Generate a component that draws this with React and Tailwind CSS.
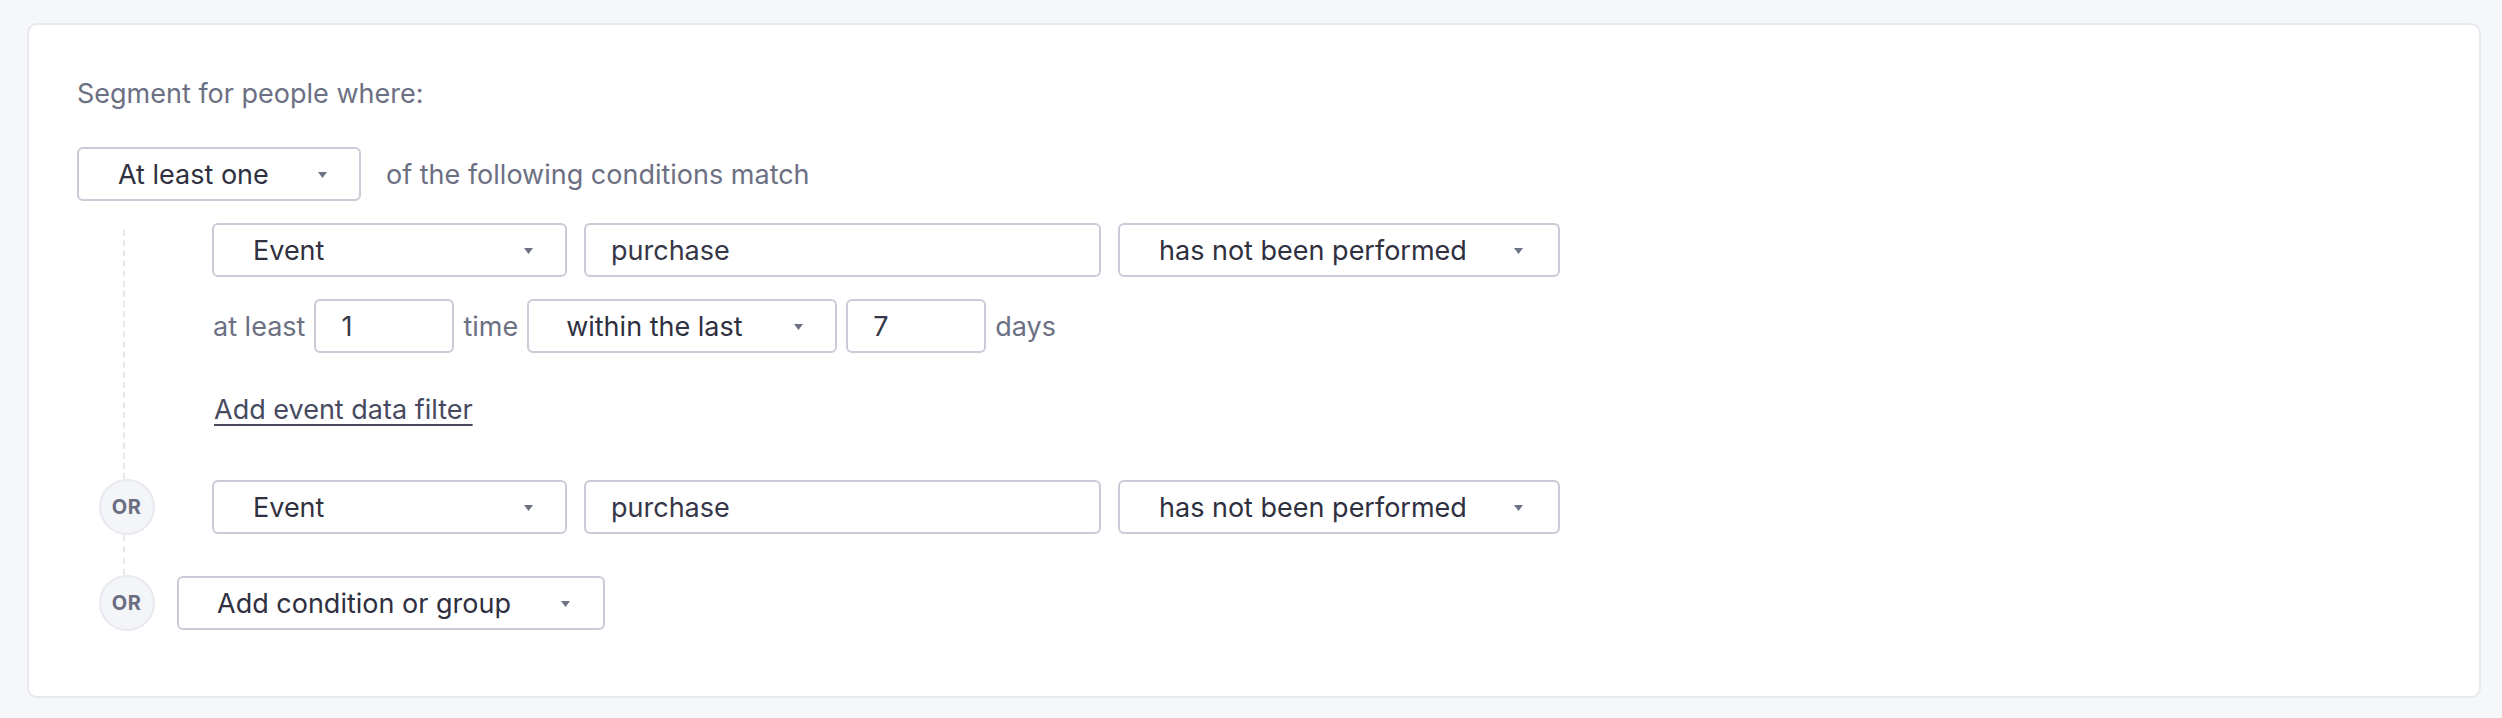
import React from "react";

const Caret = () => (
  <svg width="11" height="8" viewBox="0 0 11 8" className="shrink-0">
    <polygon points="1,1 10,1 5.5,7" fill="#6d7184" />
  </svg>
);

function Select({ label, width, padL = "pl-[39px]", padR = "pr-[31px]" }) {
  return (
    <div
      className={`h-[54px] ${width} ${padL} ${padR} pt-[2px] shrink-0 flex items-center justify-between bg-white border-2 border-[#cacbd7] rounded-[6px] text-[#2f3040]`}
    >
      <span>{label}</span>
      <Caret />
    </div>
  );
}

function TextBox({ value, width }) {
  return (
    <div
      className={`h-[54px] ${width} shrink-0 flex items-center pl-[25px] pt-[2px] bg-white border-2 border-[#cacbd7] rounded-[6px] text-[#363748]`}
    >
      {value}
    </div>
  );
}

function OrBadge() {
  return (
    <div className="w-[56px] h-[56px] shrink-0 rounded-full bg-[#f4f5f8] border-2 border-[#e8e9ef] flex items-center justify-center text-[20px] font-bold text-[#6a6e82] tracking-wide">
      OR
    </div>
  );
}

function EventRow() {
  return (
    <div className="flex items-center gap-[17px]">
      <Select label="Event" width="w-[355px]" padR="pr-[31px]" />
      <TextBox value="purchase" width="w-[517px]" />
      <Select label="has not been performed" width="w-[442px]" padR="pr-[34px]" />
    </div>
  );
}

function App() {
  return (
    <div className="w-full h-[718px] bg-[#f6f7f9] pt-[23px] pl-[27px] pr-[21px] font-['Inter',sans-serif] text-[27px] leading-[32px]">
      <div className="h-[675px] bg-white border-2 border-[#e8e9ee] rounded-[10px] pt-[53px] pl-[48px]">
        <div className="text-[#6c7083]">Segment for people where:</div>

        <div className="mt-[37px] flex items-center gap-[25px]">
          <Select label="At least one" width="w-[284px]" padR="pr-[31px]" />
          <span className="text-[#6c7083] pt-[2px]">of the following conditions match</span>
        </div>

        {/* condition 1 */}
        <div className="mt-[22px] flex">
          <div className="w-[59px] ml-[20px] shrink-0 pl-[26px] pt-[7px]">
            <div className="h-full border-l-2 border-dashed border-[#e6e7ec]" />
          </div>
          <div className="ml-[56px] pb-[53px]">
            <EventRow />
            <div className="mt-[22px] flex items-center gap-[9px] text-[#6c7083]">
              <span className="ml-[1px] pt-[2px]">at least</span>
              <TextBox value="1" width="w-[140px]" />
              <span className="pt-[2px]">time</span>
              <Select label="within the last" width="w-[310px]" padL="pl-[37px]" padR="pr-[31px]" />
              <TextBox value="7" width="w-[140px]" />
              <span className="pt-[2px]">days</span>
            </div>
            <div className="mt-[41px]">
              <span className="ml-[2px] text-[#474a5f] underline decoration-2 underline-offset-[5px]">
                Add event data filter
              </span>
            </div>
          </div>
        </div>

        {/* condition 2 */}
        <div className="flex items-center">
          <div className="w-[59px] ml-[20px] shrink-0 flex justify-center">
            <OrBadge />
          </div>
          <div className="ml-[56px]">
            <EventRow />
          </div>
        </div>

        <div className="w-[59px] ml-[20px] h-[40px] pl-[26px]">
          <div className="h-full border-l-2 border-dashed border-[#e6e7ec]" />
        </div>

        {/* add condition */}
        <div className="flex items-center">
          <div className="w-[59px] ml-[20px] shrink-0 flex justify-center">
            <OrBadge />
          </div>
          <div className="ml-[21px]">
            <Select label="Add condition or group" width="w-[428px]" padL="pl-[38px]" padR="pr-[32px]" />
          </div>
        </div>
      </div>
    </div>
  );
}

export default App;
